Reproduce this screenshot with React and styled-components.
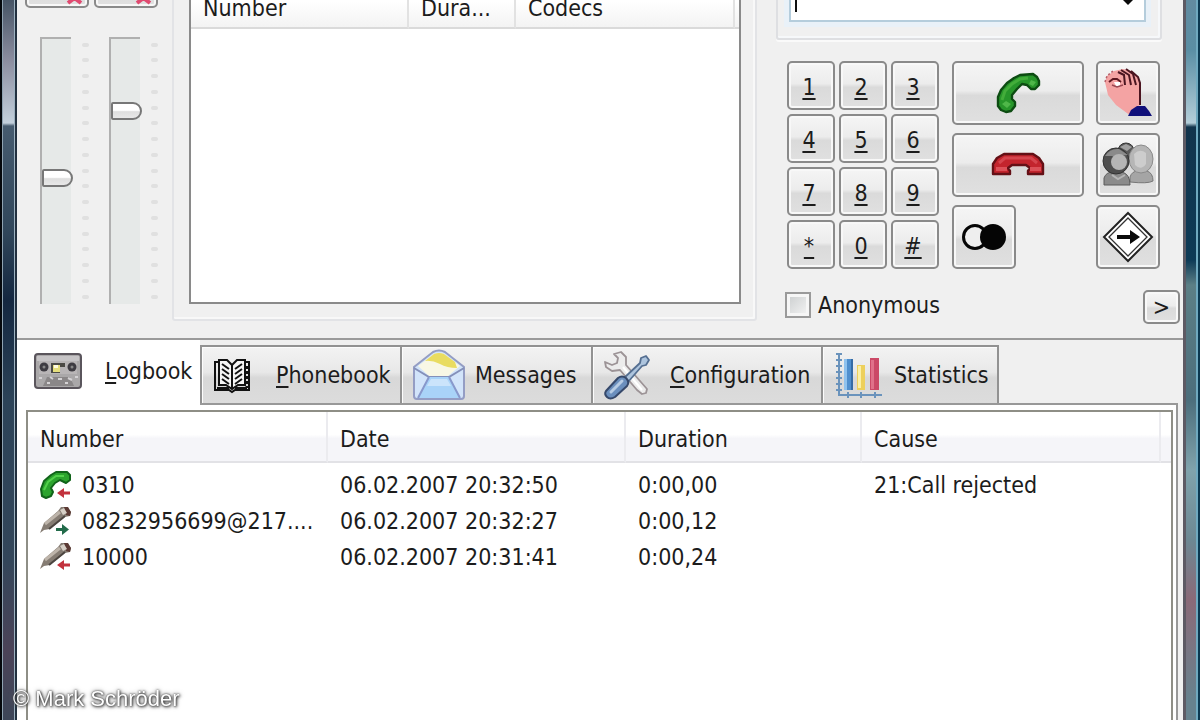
import React, { useState } from "react";
import styled, { createGlobalStyle } from "styled-components";

const GlobalStyle = createGlobalStyle`
  * {
    box-sizing: border-box;
  }
  body {
    margin: 0;
    overflow: hidden;
  }
  body, button, input {
    font-family: "DejaVu Sans Condensed", "DejaVu Sans", sans-serif;
    font-size: 23px;
    line-height: 28px;
    color: #1c1c1c;
  }
`;

// Window
const Window = styled.div`
  display: flex;
  height: 100vh;
  overflow: hidden;
  background: #f0f0f0;
`;

const LeftFrame = styled.div`
  flex: 0 0 17px;
  border-left: 2px solid #05080c;
  border-right: 2px solid #22303f;
  box-shadow: inset 1px 0 #8fa3b2, inset -1px 0 #9db2c0;
  background: linear-gradient(
    #465465 0px, #8b8d9f 60px, #c3d0dc 123px, #465b6f 126px, #31475b 230px,
    #142740 300px, #2c4358 400px, #33465a 560px, #4b4358 650px, #3d4658 720px
  );
`;

const RightFrame = styled.div`
  flex: 0 0 17px;
  border-left: 3px solid #5d5a64;
  border-right: 2px solid #0b3850;
  box-shadow: inset -2px 0 #6fa9bf;
  background: linear-gradient(
    #628ba0 0px, #5a8ea4 50px, #b4ced9 123px, #12344c 127px, #0d3a56 260px,
    #5c7f86 285px, #4c6e7c 400px, #80a3ac 470px, #6d8893 540px, #8a6a78 600px, #67828e 700px
  );
`;

const Client = styled.main`
  flex: 1;
  min-width: 0;
  display: flex;
  flex-direction: column;
`;

// Upper panel, scrolled so that its first rows are above the window edge
const PhonePanel = styled.section`
  flex: none;
  display: flex;
  align-items: flex-start;
  margin-top: -56px;
  padding: 0 3px 14px 8px;
  border-bottom: 2px solid #9a9a9a;
`;

const BevelButton = styled.button`
  display: flex;
  align-items: center;
  justify-content: center;
  width: ${(props) => props.$width || 64}px;
  height: ${(props) => props.$height || 64}px;
  padding: 0;
  border: 2px solid #8a8a8a;
  border-radius: 5px;
  box-shadow: inset 0 0 0 2px #f8f8f8;
  background: linear-gradient(#f5f5f5 0%, #ececec 46%, #dadada 54%, #e0e0e0 100%);
`;

// Volume controls
const Levels = styled.div`
  display: flex;
  gap: 5px;
`;

const Level = styled.div`
  display: flex;
  flex-direction: column;
  gap: 29px;
`;

const FaderRow = styled.div`
  display: flex;
  align-items: center;
  gap: 9px;
  padding-left: 15px;
`;

const Fader = styled.input`
  appearance: none;
  writing-mode: vertical-lr;
  direction: rtl;
  width: 33px;
  height: 267px;
  margin: 0;
  border-left: 2px solid #b0b0b0;
  background: linear-gradient(#b0b0b0 2px, #e6e9e8 2px) no-repeat 0 0 / 29px 100%;

  &::-webkit-slider-thumb {
    appearance: none;
    width: 31px;
    height: 18px;
    border: 2px solid #777;
    border-radius: 2px 9px 9px 2px;
    background: linear-gradient(#ffffff 45%, #dedede 55%, #e8e8e8);
  }
`;

const Ticks = styled.div`
  display: flex;
  flex-direction: column;
  justify-content: space-between;
  width: 7px;
  height: 256px;
`;

const Tick = styled.span`
  height: 4px;
  border-radius: 2px;
  background: #e0e0e0;
`;

// Active calls
const CallsGroup = styled.div`
  flex: 1;
  min-width: 0;
  margin: 0 19px 0 14px;
  padding: 37px 14px 15px 15px;
  border: 2px solid #e2e3e6;
  border-radius: 3px;
  box-shadow: inset -2px -2px #f8f8f8;
`;

const CallsBox = styled.div`
  height: 321px;
  border: 2px solid #8a8a8a;
  background: #fff;
`;

const Table = styled.table`
  width: 100%;
  table-layout: fixed;
  border-collapse: separate;
  border-spacing: 0;
`;

const CallHead = styled.th`
  width: ${(props) => (props.$width ? `${props.$width}px` : "auto")};
  height: 44px;
  padding: 3px 0 0 12px;
  text-align: left;
  font-weight: normal;
  border-bottom: 2px solid #dadada;
  border-right: ${(props) => (props.$width ? "2px solid #e2e2e2" : "none")};
  background: linear-gradient(#ffffff 40%, #f3f3f3);
`;

// Dialling
const DialPanel = styled.div`
  flex: 0 0 404px;
`;

const NumberGroup = styled.div`
  width: 386px;
  height: 96px;
  padding: 34px 14px 16px 11px;
  border: 2px solid #dedfe2;
  border-radius: 3px;
  box-shadow: inset -2px -2px #f6f8fa, 0 2px #fafafa;
`;

const Combo = styled.div`
  display: flex;
  align-items: center;
  height: 42px;
  padding-left: 4px;
  border: 2px solid #b5cddc;
  background: #fff;
  box-shadow: 0 0 0 5px #e9f1f8;
`;

const Caret = styled.span`
  width: 2px;
  height: 22px;
  background: #111;
`;

const NumberInput = styled.input`
  flex: 1;
  min-width: 0;
  padding: 0 4px;
  border: 0;
  outline: 0;
  background: transparent;
`;

const DropButton = styled.button`
  display: flex;
  width: 18px;
  margin-right: 7px;
  padding: 0;
  border: 0;
  background: transparent;
`;

const DialRow = styled.div`
  display: flex;
  gap: 13px;
  margin: 21px 0 21px 11px;
`;

const Keypad = styled.div`
  display: grid;
  grid-template-columns: repeat(3, 48px);
  gap: 4px;
`;

const Key = styled(BevelButton)`
  padding-right: 4px;
  padding-top: 2px;
`;

const Mnemonic = styled.u`
  text-decoration-thickness: 2px;
  text-underline-offset: 3px;
  text-decoration-skip-ink: none;
`;

const CallButtons = styled.div`
  display: grid;
  grid-template-columns: 132px 64px;
  gap: 8px 12px;
`;

const OptionsRow = styled.div`
  display: flex;
  align-items: flex-start;
  justify-content: space-between;
  padding-left: 9px;
`;

const CheckLabel = styled.label`
  display: flex;
  align-items: center;
  gap: 7px;
  height: 30px;
`;

const CheckBox = styled.input`
  appearance: none;
  width: 26px;
  height: 26px;
  margin: 0;
  border: 2px solid #9a9a9a;
  box-shadow: inset 0 0 0 3px #f6f6f6;
  background: linear-gradient(135deg, #c9cccd, #f6f6f6);

  &:checked {
    background: #4a5a68;
  }
`;

// Notebook
const TabBar = styled.div`
  flex: none;
  display: flex;
  align-items: flex-end;
  height: 63px;
`;

const Tab = styled.button`
  position: relative;
  display: flex;
  align-items: center;
  gap: ${(props) => props.$gap}px;
  width: ${(props) => props.$width}px;
  height: ${(props) => (props.$active ? 65 : 58)}px;
  margin-bottom: ${(props) => (props.$active ? -2 : 0)}px;
  padding: ${(props) => (props.$active ? "0 0 4px 17px" : "0 0 0 11px")};
  white-space: nowrap;
  border: 2px solid #929292;
  border-width: ${(props) => (props.$active ? "0" : "2px 0 0 2px")};
  box-shadow: ${(props) => (props.$active ? "none" : "inset 1px 1px #fcfcfc")};
  background: ${(props) =>
    props.$active ? "#fff" : "linear-gradient(#f3f3f3 0%, #e8e8e8 45%, #d8d8d8 55%, #dcdcdc 100%)"};

  &:last-child {
    border-right-width: 2px;
  }
`;

const Page = styled.section`
  flex: 1;
  display: flex;
  margin-right: 5px;
  padding: 5px 3px 0 9px;
  border-top: 2px solid #989898;
  border-right: 2px solid #989898;
  background: #fff;
`;

const LogFrame = styled.div`
  flex: 1;
  min-width: 0;
  border: 2px solid #8e8e86;
  border-bottom: 0;
`;

const LogHead = styled.th`
  width: ${(props) => (props.$width ? `${props.$width}px` : "auto")};
  height: 51px;
  padding: 5px 0 0 12px;
  text-align: left;
  font-weight: normal;
  border-bottom: 2px solid #e2e2e6;
  border-right: ${(props) => (props.$width ? "2px solid #ebebef" : "none")};
  background: linear-gradient(#ffffff 46%, #f5f5f9 54%);
`;

const LogBody = styled.tbody`
  &::before {
    content: "";
    display: table-row;
    height: 4px;
  }
`;

const LogCell = styled.td`
  height: 36px;
  padding: 0 0 0 12px;
  white-space: nowrap;
`;

const Entry = styled.div`
  display: flex;
  align-items: center;
  gap: 11px;
`;

const Credit = styled.small`
  position: fixed;
  left: 13px;
  bottom: 8px;
  font-family: "Liberation Sans", sans-serif;
  font-size: 22px;
  line-height: 26px;
  color: #fff;
  text-shadow: 0 0 2px #333, 1px 1px 3px #333, 0 0 5px #777;
`;

const Icon = styled.svg`
  display: block;
  flex: none;
  overflow: visible;
`;

// Icons
const MuteIcon = () => (
  <Icon width="44" height="54" viewBox="0 0 44 54">
    <path d="M6 20h8l10-9v26l-10-9H6z" fill="#888" stroke="#333" strokeWidth="2" />
    <path d="M33 44l13 10M46 44l-13 10" stroke="#e04a70" strokeWidth="4" />
  </Icon>
);

const CallIcon = () => (
  <Icon width="44" height="40" viewBox="0 0 44 40">
    <path
      d="M18 5L24 2L37 1L41 4L43 8V12L39 16H35L31 12L26 11L21 16L16 22V26L19 29V33L15 38L10 39L5 37L2 33V24L5 17L11 10Z"
      fill="#27962a" stroke="#0d4c12" strokeWidth="2.4" strokeLinejoin="round"
    />
    <path d="M6 27L9 18L16 11L24 6L32 5" fill="none" stroke="#43ad3a" strokeWidth="3" />
    <path d="M35 7l5 2-3 4-4-2zM6 31l4-3 5 3-4 4z" fill="#4fb749" />
  </Icon>
);

const HangUpIcon = () => (
  <Icon width="52" height="24" viewBox="0 0 52 24">
    <path
      d="M1 21V11L5 5L12 1H41L47 5L51 11V21H36V18L38 15L34 12H20L16 15L18 18V21Z"
      fill="#c3242d" stroke="#641016" strokeWidth="2.4" strokeLinejoin="round"
    />
    <path d="M7 10L13 5H39L45 10" fill="none" stroke="#d5454e" strokeWidth="3" />
    <path d="M4 16h11M38 16h11" stroke="#dc5058" strokeWidth="4" />
  </Icon>
);

const HandIcon = () => (
  <Icon width="48" height="50" viewBox="0 0 48 50">
    <path d="M1 14L3 8L10 3L19 1L28 3L34 10L37 16V36L31 41L27 48L12 37L4 27Z" fill="#f4a3a3" />
    <path d="M1 14L3 8L9 3" fill="none" stroke="#b55d66" strokeWidth="1.5" strokeDasharray="2 2" />
    <path d="M5 14L9 11H13L17 14" fill="none" stroke="#5d1720" strokeWidth="2" />
    <path d="M10 14h6v4h-4z" fill="#fff" />
    <path d="M14 4L20 7L21 17M17 2L25 7L27 17M22 1L29 6L32 17M27 3L34 9L36 15V37" fill="none" stroke="#4a1420" strokeWidth="2" />
    <path d="M8 17l5 2 6-2" fill="none" stroke="#994752" strokeWidth="1.5" />
    <path d="M24 48L27 42L33 38H41L45 43L48 48Z" fill="#10107a" />
  </Icon>
);

const PeopleIcon = () => (
  <Icon width="52" height="46" viewBox="0 0 52 46">
    <ellipse cx="24" cy="9" rx="8" ry="8" fill="#5a5a5a" stroke="#333" />
    <path d="M18 5l6-3 6 3-5 4z" fill="#a0a0a0" />
    <path d="M28 40V35Q30 29 36 29H45Q51 31 51 39Q46 42 28 40Z" fill="#a5a5a5" stroke="#777" />
    <ellipse cx="39" cy="17" rx="12" ry="14" fill="#b6b6b6" stroke="#8a8a8a" />
    <path d="M32 12Q38 6 44 11V22Q39 29 33 23Z" fill="#cdcdcd" />
    <path d="M2 43V36Q4 30 11 30H20Q28 32 28 43Z" fill="#8b8b8b" stroke="#5b5b5b" />
    <ellipse cx="14" cy="19" rx="13" ry="13" fill="#4e4e4e" stroke="#333" />
    <path d="M3 14Q8 6 17 7L26 13L15 14Z" fill="#8a8a8a" />
    <ellipse cx="17" cy="20" rx="8" ry="8" fill="#b5b5b5" />
    <path d="M10 33l6 4 7-4" fill="none" stroke="#b5b5b5" strokeWidth="2" />
  </Icon>
);

const ToggleIcon = () => (
  <Icon width="46" height="28" viewBox="0 0 46 28">
    <circle cx="14" cy="14" r="11.5" fill="#eee" stroke="#050505" strokeWidth="3" />
    <circle cx="32" cy="14" r="13" fill="#050505" />
  </Icon>
);

const TransferIcon = () => (
  <Icon width="50" height="50" viewBox="0 0 50 50">
    <path d="M25 1L49 25L25 49L1 25Z" fill="#fff" stroke="#222" strokeWidth="2" />
    <path d="M25 6L44 25L25 44L6 25Z" fill="#fff" stroke="#333" strokeWidth="1.3" />
    <path d="M14 23H27V18L37 25L27 32V27H14Z" fill="#0a0a0a" />
  </Icon>
);

const CassetteIcon = () => (
  <Icon width="48" height="36" viewBox="0 0 48 36">
    <rect x="1" y="1" width="46" height="34" rx="3" fill="#aaa8a9" stroke="#5a555c" strokeWidth="2" />
    <path d="M3 3h42v5H3z" fill="#c6c4c6" />
    <rect x="5" y="8" width="38" height="13" fill="#b8b5b6" />
    <circle cx="10" cy="14" r="4.5" fill="#3e3c42" />
    <circle cx="38" cy="14" r="4.5" fill="#3e3c42" />
    <circle cx="10" cy="14" r="1.5" fill="#888" />
    <circle cx="38" cy="14" r="1.5" fill="#888" />
    <path d="M17 10h14v4h-5v6h-9z" fill="#4b4a45" />
    <path d="M19 12h7v7h-7z" fill="#e6df7d" />
    <path d="M20 12h4v3h-4z" fill="#fffce0" />
    <path d="M9 33l4-9h23l4 9z" fill="#8a8788" />
    <path d="M5 25h3M16 24l3 2M24 26h4M34 25l4 2M41 24h3M13 30h3M31 30h3" stroke="#d4d2d4" strokeWidth="2" />
  </Icon>
);

const BookIcon = () => (
  <Icon width="38" height="34" viewBox="0 0 38 34" fill="none" stroke="#111" strokeWidth="2">
    <path d="M6 2H14L19 7L24 2H32V27H25L19 31L13 27H6Z" fill="#f4f4f4" />
    <path d="M6 4H2V32H16L19 34L22 32H36V4H32M19 7V31" />
    <path d="M9 6L16 11M9 11L16 16M9 16L16 21M9 21L16 26M29 6L22 11M29 11L22 16M29 16L22 21M29 21L22 26" />
    <path d="M34 8v22" strokeWidth="3" strokeDasharray="3 2" />
    <path d="M4 30h12M22 30h12" strokeWidth="2" />
  </Icon>
);

const MailIcon = () => (
  <Icon width="52" height="50" viewBox="0 0 52 50">
    <path d="M1 17L20 2Q26 -1 32 2L51 17V46Q51 49 48 49H4Q1 49 1 46Z" fill="#d2e4fa" stroke="#949dc4" strokeWidth="2" />
    <path d="M5 16L21 4Q26 2 31 4L47 16L35 26H16Z" fill="#f8f7e5" />
    <path d="M12 11L21 4Q26 2 31 4L42 12L44 18Q34 18 27 14Q19 10 12 11Z" fill="#e9dc61" />
    <path d="M1 18L16 27H36L51 18" fill="none" stroke="#8490ba" strokeWidth="2" />
    <path d="M16 27L5 48H47L36 27Z" fill="#a9d3f8" />
    <path d="M16 27L5 48M36 27L47 48" fill="none" stroke="#8898cc" strokeWidth="2" />
    <path d="M18 29H34L38 36H14Z" fill="#cbe4fb" />
  </Icon>
);

const ToolsIcon = () => (
  <Icon width="46" height="48" viewBox="0 0 46 48" strokeLinejoin="round">
    <path
      d="M10 3L17 1L22 6V14L43 38L42 42L38 43L33 39L16 19L8 20L2 16L1 11L8 14L13 12L14 7Z"
      fill="#ececec" stroke="#9c9396" strokeWidth="1.8"
    />
    <path d="M19 16L38 39" stroke="#fff" strokeWidth="2" />
    <path d="M20 27L36 12L37 7L42 5L45 9L42 14L38 15L24 31Z" fill="#aec5de" stroke="#556f91" strokeWidth="1.8" />
    <path d="M2 40L14 27Q18 24 22 27Q26 31 23 35L11 46Q6 49 3 46Q0 43 2 40Z" fill="#6b8fbd" stroke="#36496b" strokeWidth="2" />
    <path d="M7 41L18 30" stroke="#b7cce4" strokeWidth="3" strokeLinecap="round" />
  </Icon>
);

const ChartIcon = () => (
  <Icon width="48" height="46" viewBox="0 0 48 46">
    <path d="M5 1V43H48M2 2h6M2 8h6M2 14h6M2 20h6M2 26h6M2 32h6M2 38h6M14 40v6M27 40v6M41 40v6" fill="none" stroke="#6a93bc" strokeWidth="2" />
    <path d="M10 7h9v31h-9z" fill="#4f8fce" />
    <path d="M10 7h3v31h-3z" fill="#8fc2ee" />
    <path d="M17 7h2v31h-2z" fill="#356ba5" />
    <path d="M23 13h8v25h-8z" fill="#edd05c" />
    <path d="M24 14h3v22h-3z" fill="#fbf0a6" />
    <path d="M36 6h9v32h-9z" fill="#cb4967" />
    <path d="M37 8h3v29h-3z" fill="#e0718a" />
  </Icon>
);

const RedArrow = () => (
  <path d="M30 20.5H24V17L17 22L24 27V23.5H30Z" fill="#c2323d" />
);

const MissedIcon = () => (
  <Icon width="31" height="28" viewBox="0 0 31 28">
    <path
      d="M11 4L16 1H27L30 4V9L26 12L20 9L15 12L11 17L13 21L11 25L6 27L2 25L1 18L4 10Z"
      fill="#2ba42d" stroke="#11641a" strokeWidth="2" strokeLinejoin="round"
    />
    <path d="M4 19L8 11L16 5H24" fill="none" stroke="#52d14b" strokeWidth="2" />
    <RedArrow />
  </Icon>
);

const HandsetIcon = ({ outgoing }) => (
  <Icon width="31" height="28" viewBox="0 0 31 28">
    <path d="M0 26L4 16L18 4L21 0L27 0L31 5L30 9L25 10L10 22L4 23Z" fill="#857c73" />
    <path d="M5 17L20 5" stroke="#bdb4aa" strokeWidth="3" />
    <path d="M9 22L25 9" stroke="#4b4540" strokeWidth="2" />
    <path d="M24 0L28 0L31 5L30 9L26 8Z" fill="#5b3a34" />
    <path d="M20 3l4-2 3 5-4 2z" fill="#d6cfc6" />
    {outgoing ? <path d="M16 21H22V17L29 22.5L22 28V24H16Z" fill="#226b4a" /> : <RedArrow />}
  </Icon>
);

const KEYS = ["1", "2", "3", "4", "5", "6", "7", "8", "9", "*", "0", "#"];

const TABS = [
  { id: "logbook", key: "L", text: "ogbook", width: 183, gap: 23, icon: <CassetteIcon /> },
  { id: "phonebook", key: "P", text: "honebook", width: 200, gap: 25, icon: <BookIcon /> },
  { id: "messages", key: "", text: "Messages", width: 191, gap: 10, icon: <MailIcon /> },
  { id: "configuration", key: "C", text: "onfiguration", width: 230, gap: 20, icon: <ToolsIcon /> },
  { id: "statistics", key: "", text: "Statistics", width: 178, gap: 12, icon: <ChartIcon /> },
];

const LOG = [
  { number: "0310", date: "06.02.2007 20:32:50", duration: "0:00,00", cause: "21:Call rejected", icon: <MissedIcon /> },
  { number: "08232956699@217....", date: "06.02.2007 20:32:27", duration: "0:00,12", cause: "", icon: <HandsetIcon outgoing /> },
  { number: "10000", date: "06.02.2007 20:31:41", duration: "0:00,24", cause: "", icon: <HandsetIcon /> },
];

function VolumeLevel({ name, initial }) {
  const [value, setValue] = useState(initial);

  return (
    <Level>
      <BevelButton aria-label={`Mute ${name}`}>
        <MuteIcon />
      </BevelButton>
      <FaderRow>
        <Fader
          type="range"
          min="0"
          max="100"
          aria-label={name}
          value={value}
          onChange={(e) => setValue(Number(e.target.value))}
        />
        <Ticks>
          {Array.from({ length: 17 }, (_, i) => (
            <Tick key={i} />
          ))}
        </Ticks>
      </FaderRow>
    </Level>
  );
}

function Dialer() {
  const [number, setNumber] = useState("");
  const [anonymous, setAnonymous] = useState(false);

  return (
    <DialPanel>
      <NumberGroup>
        <Combo>
          {!number && <Caret />}
          <NumberInput
            aria-label="Number to call"
            value={number}
            onChange={(e) => setNumber(e.target.value)}
          />
          <DropButton aria-label="Recent numbers">
            <Icon width="18" height="9" viewBox="0 0 18 9">
              <path d="M2 1H16L9 8Z" fill="#0a0a0a" />
            </Icon>
          </DropButton>
        </Combo>
      </NumberGroup>
      <DialRow>
        <Keypad>
          {KEYS.map((key) => (
            <Key key={key} $width={48} $height={49} onClick={() => setNumber(number + key)}>
              <Mnemonic>{key}</Mnemonic>
            </Key>
          ))}
        </Keypad>
        <CallButtons>
          <BevelButton $width={132} aria-label="Call"><CallIcon /></BevelButton>
          <BevelButton aria-label="Hold"><HandIcon /></BevelButton>
          <BevelButton $width={132} aria-label="Hang up"><HangUpIcon /></BevelButton>
          <BevelButton aria-label="Conference"><PeopleIcon /></BevelButton>
          <BevelButton aria-label="Toggle calls"><ToggleIcon /></BevelButton>
          <BevelButton aria-label="Transfer"><TransferIcon /></BevelButton>
        </CallButtons>
      </DialRow>
      <OptionsRow>
        <CheckLabel>
          <CheckBox
            type="checkbox"
            checked={anonymous}
            onChange={(e) => setAnonymous(e.target.checked)}
          />
          Anonymous
        </CheckLabel>
        <BevelButton $width={37} $height={34}>&gt;</BevelButton>
      </OptionsRow>
    </DialPanel>
  );
}

function Logbook() {
  return (
    <LogFrame>
      <Table>
        <thead>
          <tr>
            <LogHead $width={300}>Number</LogHead>
            <LogHead $width={298}>Date</LogHead>
            <LogHead $width={236}>Duration</LogHead>
            <LogHead $width={299}>Cause</LogHead>
            <LogHead />
          </tr>
        </thead>
        <LogBody>
          {LOG.map((entry) => (
            <tr key={entry.date}>
              <LogCell>
                <Entry>
                  {entry.icon}
                  {entry.number}
                </Entry>
              </LogCell>
              <LogCell>{entry.date}</LogCell>
              <LogCell>{entry.duration}</LogCell>
              <LogCell>{entry.cause}</LogCell>
            </tr>
          ))}
        </LogBody>
      </Table>
    </LogFrame>
  );
}

function App() {
  const [tab, setTab] = useState("logbook");

  return (
    <>
      <GlobalStyle />
      <Window>
        <LeftFrame />
        <Client>
          <PhonePanel>
            <Levels>
              <VolumeLevel name="Microphone" initial={47} />
              <VolumeLevel name="Speaker" initial={74} />
            </Levels>
            <CallsGroup>
              <CallsBox>
                <Table>
                  <thead>
                    <tr>
                      <CallHead $width={218}>Number</CallHead>
                      <CallHead $width={107}>Dura...</CallHead>
                      <CallHead $width={219}>Codecs</CallHead>
                      <CallHead />
                    </tr>
                  </thead>
                </Table>
              </CallsBox>
            </CallsGroup>
            <Dialer />
          </PhonePanel>
          <TabBar role="tablist">
            {TABS.map((item) => (
              <Tab
                key={item.id}
                role="tab"
                aria-selected={tab === item.id}
                $active={tab === item.id}
                $width={item.width}
                $gap={item.gap}
                onClick={() => setTab(item.id)}
              >
                {item.icon}
                <span>
                  {item.key && <Mnemonic>{item.key}</Mnemonic>}
                  {item.text}
                </span>
              </Tab>
            ))}
          </TabBar>
          <Page>{tab === "logbook" && <Logbook />}</Page>
        </Client>
        <RightFrame />
      </Window>
      <Credit>© Mark Schröder</Credit>
    </>
  );
}

export default App;
